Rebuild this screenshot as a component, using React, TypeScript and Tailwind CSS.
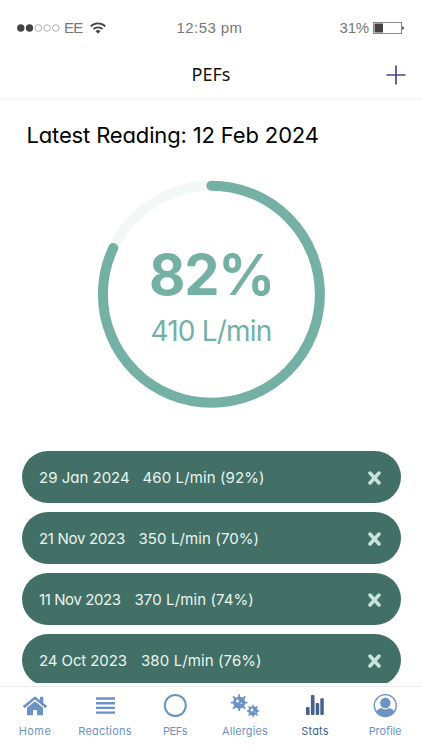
import React from "react";
import { FaHome } from "react-icons/fa";

interface Reading {
  date: string;
  value: string;
  dateClass: string;
  valueClass: string;
}

const readings: Reading[] = [
  { date: "29 Jan 2024", value: "460 L/min (92%)", dateClass: "w-[103.5px] tracking-[0px]", valueClass: "tracking-[0.1px]" },
  { date: "21 Nov 2023", value: "350 L/min (70%)", dateClass: "w-[99.5px] tracking-[-0.3px]", valueClass: "tracking-[0.1px]" },
  { date: "11 Nov 2023", value: "370 L/min (74%)", dateClass: "w-[95.5px] tracking-[-0.4px]", valueClass: "tracking-[0.1px]" },
  { date: "24 Oct 2023", value: "380 L/min (76%)", dateClass: "w-[102px] tracking-[-0.1px]", valueClass: "tracking-[0.1px]" },
];

const StatusBar: React.FC = () => (
  <div className="grid h-[55px] grid-cols-3 items-center pl-[17px] pr-[17px] pt-px font-['Liberation_Sans',sans-serif] text-[16px] text-[#777]">
    <div className="flex items-center">
      <svg width="44" height="10" viewBox="0 0 44 10" fill="none">
        <circle cx="3.8" cy="5" r="3.7" fill="#444" />
        <circle cx="12.5" cy="5" r="3.7" fill="#444" />
        <circle cx="21.4" cy="5" r="3.3" stroke="#999" strokeWidth="0.8" />
        <circle cx="30.1" cy="5" r="3.3" stroke="#999" strokeWidth="0.8" />
        <circle cx="38.8" cy="5" r="3.3" stroke="#999" strokeWidth="0.8" />
      </svg>
      <span className="ml-[3px] mt-px text-[15px] tracking-[-0.7px]">EE</span>
      <svg className="ml-[7px]" width="16" height="12" viewBox="0 0 16 12" fill="none" stroke="#444" strokeWidth="1.7">
        <path d="M0.7 4.3a10.4 10.4 0 0 1 14.6 0" />
        <path d="M3.4 7.2a6.5 6.5 0 0 1 9.2 0" />
        <path d="M5.5 9.1a3.6 3.6 0 0 1 5 0L8 11.7Z" fill="#444" stroke="none" />
      </svg>
    </div>
    <span className="mr-[3px] mt-px text-center text-[15px] tracking-[0.4px]">12:53 pm</span>
    <div className="flex items-center justify-end">
      <span className="mt-px text-[15px] tracking-[-0.2px]">31%</span>
      <svg className="ml-[4px]" width="32" height="13" viewBox="0 0 32 13">
        <rect x="0.5" y="0.5" width="28" height="11" fill="none" stroke="#888" />
        <rect x="1.5" y="1.5" width="8.5" height="9" fill="#444" />
        <path d="M29 4.2q2.3.3 2.3 1.9T29 8Z" fill="#666" />
      </svg>
    </div>
  </div>
);

const ProgressRing: React.FC<{ percent: number; flow: string }> = ({ percent, flow }) => (
  <div className="grid size-[228px] place-items-center text-[#74b0a4]">
    <svg className="col-start-1 row-start-1" width="228" height="228" viewBox="0 0 228 228" fill="none" strokeWidth="10">
      <circle cx="114.4" cy="114.2" r="108.5" stroke="#f3f8f7" />
      <circle
        cx="114.4"
        cy="114.2"
        r="108.5"
        stroke="#74b0a4"
        strokeLinecap="round"
        pathLength="100"
        strokeDasharray={`${percent} 100`}
        transform="rotate(-90 114.4 114.2)"
      />
    </svg>
    <div className="col-start-1 row-start-1 flex flex-col items-center whitespace-nowrap pt-[2px] font-['Inter',sans-serif]">
      <span className="pl-px text-[56px] font-bold leading-[64px] tracking-[-1.2px]">{percent}%</span>
      <span className="mt-[7px] text-[28px] font-normal leading-[34px] tracking-[-0.8px]">{flow}</span>
    </div>
  </div>
);

const ListIcon = () => (
  <svg width="19" height="18" viewBox="0 0 19 18" fill="currentColor">
    <path d="M0 .3h19v2.4H0zM0 5h19v2.4H0zM0 9.7h19v2.4H0zM0 14.4h19v2.4H0z" />
  </svg>
);

const RingIcon = () => (
  <svg width="24" height="24" viewBox="0 0 24 24" fill="none" stroke="currentColor" strokeWidth="2">
    <circle cx="12.3" cy="11.5" r="10.5" />
  </svg>
);

const GermsIcon = () => (
  <svg width="30" height="24" viewBox="0 0 30 24" fill="currentColor" stroke="currentColor" strokeLinecap="round">
    <circle cx="9.2" cy="8.6" r="6.1" stroke="none" />
    <path strokeWidth="1.8" d="M9.2 1v15.2M1.6 8.6h15.2M3.6 3l11.2 11.2M14.8 3 3.6 14.2" />
    <circle cx="7.5" cy="7" r="1.5" fill="#fff" stroke="none" />
    <circle cx="11.3" cy="9.3" r=".8" fill="#fff" stroke="none" />
    <circle cx="23" cy="16.9" r="4.7" stroke="none" />
    <path strokeWidth="1.5" d="M23 11.2v11.4M17.3 16.9h11.4M18.9 12.8l8.2 8.2M27.1 12.8l-8.2 8.2" />
    <circle cx="22" cy="16" r="1.4" fill="#fff" stroke="none" />
    <circle cx="24.9" cy="18" r=".6" fill="#fff" stroke="none" />
  </svg>
);

const BarsIcon = () => (
  <svg width="18" height="21" viewBox="0 0 18 21" fill="currentColor">
    <rect x="0" y="12" width="3.6" height="8" rx="1" />
    <rect x="4.9" y="0" width="3.6" height="20" rx="1" />
    <rect x="9.7" y="8" width="3.5" height="12" rx="1" />
    <rect x="14.3" y="3.3" width="3.5" height="16.7" rx="1" />
  </svg>
);

const ProfileIcon = () => (
  <svg width="24" height="24" viewBox="0 0 24 24" fill="currentColor">
    <circle cx="12.3" cy="11.6" r="11" fill="none" stroke="currentColor" strokeWidth="1.3" />
    <circle cx="12.3" cy="9" r="5.2" />
    <path d="M3.5 18q.5-2.7 4.8-3.9 4 2.7 8 0 4.3 1.2 4.8 3.9A11 11 0 0 1 3.5 18Z" />
  </svg>
);

const tabs = [
  { label: "Home", icon: <FaHome size={24} />, color: "text-[#6b93c6]", tracking: "tracking-[0.4px]" },
  { label: "Reactions", icon: <ListIcon />, color: "text-[#6b93c6]", tracking: "tracking-[0.2px]" },
  { label: "PEFs", icon: <RingIcon />, color: "text-[#6b93c6]", tracking: "tracking-[-0.5px]" },
  { label: "Allergies", icon: <GermsIcon />, color: "text-[#6b93c6]", tracking: "tracking-[0.1px]" },
  { label: "Stats", icon: <BarsIcon />, color: "text-[#45628e]", tracking: "tracking-[0.2px]" },
  { label: "Profile", icon: <ProfileIcon />, color: "text-[#6b93c6]", tracking: "tracking-[-0.1px]" },
];

export default function App() {
  return (
    <div className="flex h-[750px] w-[422px] flex-col overflow-hidden bg-white font-['Inter',sans-serif] [font-feature-settings:'cv11']">
      <StatusBar />
      <header className="grid h-[44px] grid-cols-[1fr_auto_1fr] items-center border-b border-[#f3f3f3] pl-[16px] pr-[16px]">
        <span />
        <h1 className="pb-[5px] font-['Noto_Sans',sans-serif] text-[18px] leading-6 text-[#111]">PEFs</h1>
        <svg className="mb-[4px] justify-self-end" width="20" height="20" viewBox="0 0 20 20" stroke="#4f4589" strokeWidth="1.7">
          <path d="M10 .5v19M.5 10h19" />
        </svg>
      </header>

      <main className="flex h-[584px] shrink-0 flex-col overflow-hidden">
        <h2 className="ml-[26.5px] mt-[20px] whitespace-nowrap text-[22px] leading-8 tracking-[-0.15px] text-black">Latest Reading: 12 Feb 2024</h2>
        <div className="mt-[29px] flex justify-center">
          <ProgressRing percent={82} flow="410 L/min" />
        </div>
        <ul className="ml-[22px] mt-[43px] flex w-[379px] flex-col gap-[9px]">
          {readings.map((r) => (
            <li key={r.date} className="flex h-[52px] shrink-0 items-center rounded-full bg-[#427066] pl-[17px] pr-[20px] text-[15px] text-[#eaf5f1]">
              <span className={`mt-[2px] shrink-0 whitespace-nowrap ${r.dateClass}`}>{r.date}</span>
              <span className={`mt-[2px] whitespace-nowrap ${r.valueClass}`}>{r.value}</span>
              <svg className="ml-auto mt-px" width="13" height="14" viewBox="0 0 13 14" stroke="#c8e3db" strokeWidth="3.5" strokeLinecap="round">
                <path d="M2 2l9 10M11 2 2 12" />
              </svg>
            </li>
          ))}
        </ul>
      </main>

      <nav className="mt-[3px] grid h-[64px] w-full shrink-0 grid-cols-6 border-t border-[#ececec] pr-[2px] pt-[6px]">
        {tabs.map((tab) => (
          <div key={tab.label} className={`flex flex-col items-center ${tab.color}`}>
            <div className="flex h-[25px] items-center">{tab.icon}</div>
            <span className={`mt-[5px] whitespace-nowrap text-[11px] leading-4 ${tab.tracking}`}>{tab.label}</span>
          </div>
        ))}
      </nav>
    </div>
  );
}
